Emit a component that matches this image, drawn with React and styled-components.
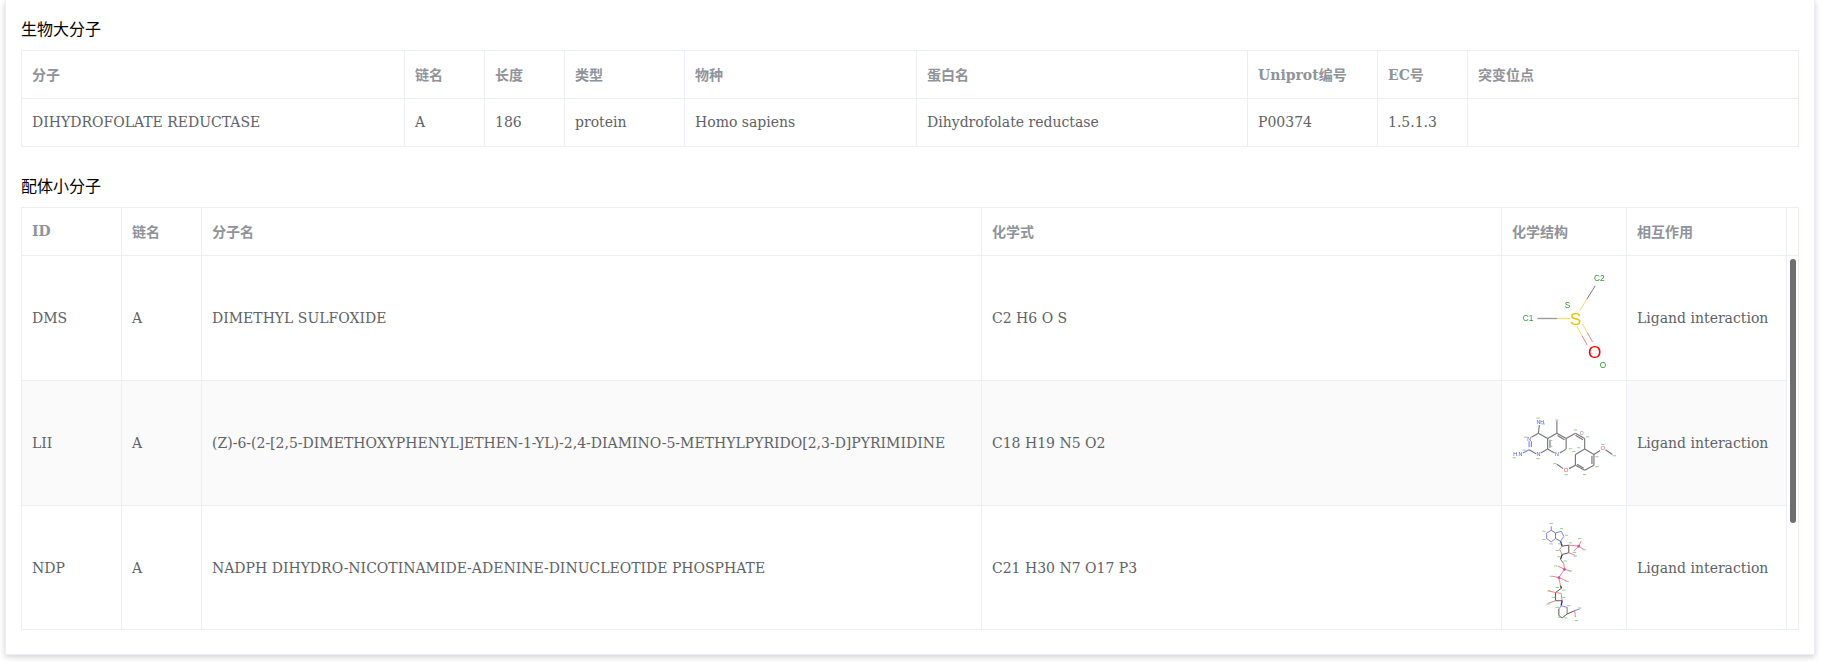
import styled, {createGlobalStyle} from 'styled-components';

const GREY = '#777';
const YEL = '#f7dc6a';
const PINK = '#f58080';
const BLUE = '#8080f5';
const MAG = '#f070c8';
const DARK = '#555';

const dms = {
  view: '123 165 375 375',
  width: 3,
  bonds: [
    [230, 354, 290, 354, '#999', 4],
    [290, 354, 330, 354, YEL, 4],
    [358, 330, 380, 295, YEL],
    [380, 295, 405, 255, GREY],
    [350, 378, 365, 406, YEL],
    [365, 406, 381, 435, PINK],
    [366, 370, 381, 397, YEL],
    [381, 397, 397, 425, PINK],
  ],
  labels: [
    [202, 363, 'C1', 25, '#2ea02e'],
    [321, 322, 'S', 25, '#2ea02e'],
    [417, 240, 'C2', 25, '#2ea02e'],
    [428, 505, 'O', 25, '#2ea02e'],
    [345, 373, 'S', 52, '#f2c200'],
    [403, 472, 'O', 52, '#ff0000'],
  ],
};

const lii = {
  view: '123 -30 375 375',
  width: 3.5,
  bonds: [
    [233, 128, 236, 103, GREY],
    [233, 128, 212, 140, GREY],
    [205, 152, 205, 170, BLUE],
    [212, 152, 212, 170, BLUE],
    [205, 178, 186, 188, BLUE],
    [205, 178, 226, 190, GREY],
    [240, 188, 261, 176, GREY],
    [261, 176, 261, 144, GREY],
    [268, 172, 268, 148, GREY],
    [261, 144, 233, 128, GREY],
    [261, 144, 289, 128, GREY],
    [289, 128, 289, 90, GREY],
    [289, 128, 317, 144, GREY],
    [291, 135, 312, 148, GREY],
    [317, 144, 317, 176, GREY],
    [317, 176, 298, 188, GREY],
    [261, 176, 282, 188, GREY],
    [317, 144, 345, 128, GREY],
    [345, 128, 373, 144, GREY],
    [345, 134, 368, 148, GREY],
    [373, 144, 373, 176, GREY],
    [373, 176, 401, 192, GREY],
    [401, 192, 401, 225, GREY],
    [395, 196, 395, 221, GREY],
    [401, 225, 373, 240, GREY],
    [373, 240, 345, 225, GREY],
    [370, 234, 350, 222, GREY],
    [345, 225, 345, 192, GREY],
    [345, 192, 373, 176, GREY],
    [401, 192, 420, 180, GREY],
    [436, 178, 457, 192, GREY],
    [345, 225, 326, 235, GREY],
    [308, 235, 289, 222, GREY],
  ],
  labels: [
    [239, 99, 'NH', 16, '#4a4af0'],
    [171, 198, 'H.N', 16, '#4a4af0'],
    [205, 150, 'N', 16, '#4a4af0'],
    [233, 198, 'N', 16, '#4a4af0'],
    [289, 198, 'N', 16, '#4a4af0'],
    [428, 180, 'O', 18, '#f05050'],
    [317, 245, 'O', 18, '#f05050'],
    [364, 134, 'O', 15, '#888'],
  ],
  hydrogens: [
    [232, 82], [248, 100], [195, 140], [190, 179], [160, 202], [232, 205], [270, 150], [270, 168],
    [345, 118], [382, 139], [355, 172], [428, 162], [463, 196], [410, 199], [410, 229], [373, 253],
    [317, 253], [283, 220], [340, 183], [289, 88], [330, 175],
  ],
};

const ndp = {
  view: '123 345 375 372',
  width: 3,
  bonds: [
    [258, 425, 272, 417, BLUE],
    [272, 417, 285, 425, GREY],
    [285, 425, 285, 442, GREY],
    [285, 442, 272, 452, BLUE],
    [272, 452, 258, 442, BLUE],
    [258, 442, 258, 425, BLUE],
    [285, 425, 302, 420, BLUE],
    [302, 420, 310, 435, BLUE],
    [310, 435, 300, 450, BLUE],
    [300, 450, 285, 442, GREY],
    [272, 417, 272, 405, BLUE],
    [300, 450, 305, 465, '#3030c0', 4],
    [305, 465, 325, 462, DARK],
    [325, 462, 325, 485, DARK],
    [325, 485, 305, 490, DARK],
    [305, 490, 297, 475, PINK],
    [297, 475, 305, 465, PINK],
    [325, 462, 355, 465, PINK],
    [355, 465, 370, 475, PINK],
    [355, 465, 362, 450, PINK],
    [355, 465, 340, 480, PINK],
    [325, 485, 345, 493, PINK],
    [305, 490, 300, 505, '#333', 4],
    [300, 505, 310, 518, GREY],
    [310, 518, 312, 535, PINK],
    [312, 535, 330, 540, PINK],
    [312, 535, 292, 525, PINK],
    [312, 535, 295, 560, MAG],
    [295, 560, 275, 556, PINK],
    [295, 560, 318, 570, PINK],
    [295, 560, 300, 585, PINK],
    [300, 585, 303, 592, '#333', 4],
    [303, 592, 285, 605, DARK],
    [285, 605, 302, 608, PINK],
    [302, 608, 305, 630, PINK],
    [305, 630, 285, 630, DARK],
    [285, 630, 285, 605, DARK],
    [285, 605, 262, 600, PINK],
    [285, 630, 262, 638, PINK],
    [305, 630, 302, 645, '#2020c0', 4],
    [302, 645, 320, 650, BLUE],
    [320, 650, 320, 670, GREY],
    [320, 670, 305, 682, DARK],
    [305, 682, 295, 675, DARK],
    [295, 675, 295, 655, DARK],
    [295, 655, 302, 645, BLUE],
    [320, 670, 343, 660, DARK],
    [343, 660, 345, 680, PINK],
    [343, 660, 358, 655, BLUE],
  ],
  labels: [],
  atoms: [
    [355, 465, '#e040b0'],
    [312, 535, '#e040b0'],
    [295, 560, '#e040b0'],
  ],
  hydrogens: [
    [272, 396], [250, 420], [250, 445], [272, 458], [303, 412], [318, 432], [297, 458], [330, 455],
    [358, 442], [372, 476], [342, 484], [345, 495], [290, 478], [295, 497], [314, 510], [285, 525],
    [330, 540], [272, 556], [320, 572], [290, 590], [310, 598], [265, 600], [262, 640], [278, 620],
    [310, 620], [325, 645], [297, 680], [316, 682], [290, 650], [348, 690], [358, 652],
  ],
};

const Molecule = ({data}) => (
  <MoleculeSvg viewBox={data.view} aria-label="化学结构">
    {data.bonds.map(([x1, y1, x2, y2, color, w], i) => (
      <line key={i} x1={x1} y1={y1} x2={x2} y2={y2} stroke={color} strokeWidth={w || data.width} />
    ))}
    {(data.hydrogens || []).map(([x, y], i) => (
      <line key={i} x1={x - 5} y1={y} x2={x + 5} y2={y} stroke="#8fd08f" strokeWidth="3" />
    ))}
    {(data.atoms || []).map(([x, y, color], i) => (
      <circle key={i} cx={x} cy={y} r="4" fill={color} />
    ))}
    {data.labels.map(([x, y, text, size, color], i) => (
      <AtomLabel key={i} x={x} y={y} fontSize={size} fill={color}>
        {text}
      </AtomLabel>
    ))}
  </MoleculeSvg>
);

const proteinCols = [383, 80, 80, 120, 232, 331, 130, 90, 330];
const proteinHead = ['分子', '链名', '长度', '类型', '物种', '蛋白名', 'Uniprot编号', 'EC号', '突变位点'];
const proteinRow = ['DIHYDROFOLATE REDUCTASE', 'A', '186', 'protein', 'Homo sapiens', 'Dihydrofolate reductase', 'P00374', '1.5.1.3', ''];

const ligandCols = [100, 80, 780, 520, 125, 160];
const ligandHead = ['ID', '链名', '分子名', '化学式', '化学结构', '相互作用'];
const ligands = [
  {id: 'DMS', chain: 'A', name: 'DIMETHYL SULFOXIDE', formula: 'C2 H6 O S', mol: dms},
  {id: 'LII', chain: 'A', name: '(Z)-6-(2-[2,5-DIMETHOXYPHENYL]ETHEN-1-YL)-2,4-DIAMINO-5-METHYLPYRIDO[2,3-D]PYRIMIDINE', formula: 'C18 H19 N5 O2', mol: lii},
  {id: 'NDP', chain: 'A', name: 'NADPH DIHYDRO-NICOTINAMIDE-ADENINE-DINUCLEOTIDE PHOSPHATE', formula: 'C21 H30 N7 O17 P3', mol: ndp},
];

const App = () => {
  return (
    <Page>
      <GlobalStyle />
      <Card>
        <Title>生物大分子</Title>
        <TableBox>
          <Table $width={1776}>
            <colgroup>
              {proteinCols.map((w, i) => (
                <col key={i} width={w} />
              ))}
            </colgroup>
            <thead>
              <tr>
                {proteinHead.map(h => (
                  <Th key={h}>{h}</Th>
                ))}
              </tr>
            </thead>
            <tbody>
              <tr>
                {proteinRow.map((c, i) => (
                  <Td key={i} $short $last={i === proteinRow.length - 1}>{c}</Td>
                ))}
              </tr>
            </tbody>
          </Table>
        </TableBox>

        <Title $second>配体小分子</Title>
        <TableBox>
          <Table $width={1776}>
            <colgroup>
              {ligandCols.map((w, i) => (
                <col key={i} width={w} />
              ))}
              <col width={11} />
            </colgroup>
            <thead>
              <tr>
                {ligandHead.map(h => (
                  <Th key={h}>{h}</Th>
                ))}
                <Th />
              </tr>
            </thead>
          </Table>
          <BodyRow>
            <RowsClip>
              <Table $width={1765}>
                <colgroup>
                  {ligandCols.map((w, i) => (
                    <col key={i} width={w} />
                  ))}
                </colgroup>
                <tbody>
                  {ligands.map((l, i) => (
                    <tr key={l.id}>
                      <Td $striped={i === 1}>{l.id}</Td>
                      <Td $striped={i === 1}>{l.chain}</Td>
                      <Td $striped={i === 1}>{l.name}</Td>
                      <Td $striped={i === 1}>{l.formula}</Td>
                      <StructureCell>
                        <Molecule data={l.mol} />
                      </StructureCell>
                      <Td $striped={i === 1}>Ligand interaction</Td>
                    </tr>
                  ))}
                </tbody>
              </Table>
            </RowsClip>
            <Gutter>
              <Thumb />
            </Gutter>
          </BodyRow>
        </TableBox>
      </Card>
    </Page>
  );
};

const GlobalStyle = createGlobalStyle`
  html, body {
    margin: 0;
    padding: 0;
    background: #fff;
    overflow: hidden;
  }
`;

const Page = styled.div`
  width: 1821px;
  height: 662px;
  box-sizing: border-box;
  padding: 0 6px 7px 5px;
  overflow: hidden;
  font-family: 'DejaVu Serif', 'Noto Sans CJK SC', serif;
  font-size: 14px;
`;

const Card = styled.div`
  height: 100%;
  box-sizing: border-box;
  padding: 19px 15px 25px;
  background: #fff;
  border: 1px solid #ebeef5;
  border-top: 0;
  box-shadow: 0 2px 6px rgba(0, 0, 0, 0.18);
`;

const Title = styled.div`
  height: 21px;
  line-height: 21px;
  margin-top: ${p => (p.$second ? '29px' : '0')};
  margin-bottom: 10px;
  font-size: 16px;
  color: #000;
`;

const TableBox = styled.div`
  width: 1778px;
  box-sizing: border-box;
  border-top: 1px solid #ebeef5;
  border-left: 1px solid #ebeef5;
  border-right: 1px solid #ebeef5;
`;

const Table = styled.table`
  width: ${p => p.$width}px;
  table-layout: fixed;
  border-collapse: separate;
  border-spacing: 0;
`;

const Th = styled.th`
  height: 48px;
  box-sizing: border-box;
  padding: 0 10px 2px;
  text-align: left;
  font-weight: 700;
  color: #909399;
  border-bottom: 1px solid #ebeef5;
  border-right: 1px solid #ebeef5;
  white-space: nowrap;

  &:last-child {
    border-right: 0;
  }
`;

const Td = styled.td`
  height: ${p => (p.$short ? '48px' : '125px')};
  box-sizing: border-box;
  padding: ${p => (p.$short ? '0 10px 2px' : '0 10px')};
  color: #606266;
  background: ${p => (p.$striped ? '#fafafa' : '#fff')};
  border-bottom: 1px solid #ebeef5;
  border-right: ${p => (p.$last ? '0' : '1px solid #ebeef5')};
  white-space: nowrap;
`;

const StructureCell = styled.td`
  padding: 0;
  background: #fff;
  border-bottom: 1px solid #ebeef5;
  border-right: 1px solid #ebeef5;
`;

const MoleculeSvg = styled.svg`
  display: block;
  width: 124px;
  height: 124px;
  filter: blur(0.25px);
`;

const AtomLabel = styled.text`
  font-family: 'Liberation Sans', sans-serif;
  text-anchor: middle;
`;

const BodyRow = styled.div`
  display: flex;
  height: 374px;
  box-sizing: border-box;
  border-bottom: 1px solid #ebeef5;
`;

const RowsClip = styled.div`
  width: 1765px;
  overflow: hidden;
`;

const Gutter = styled.div`
  position: relative;
  width: 11px;
`;

const Thumb = styled.div`
  position: absolute;
  top: 3px;
  left: 3px;
  width: 6px;
  height: 264px;
  border-radius: 3px;
  background: #6e6e6e;
`;

export default App;
